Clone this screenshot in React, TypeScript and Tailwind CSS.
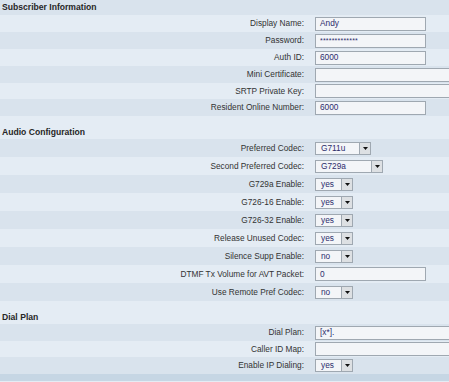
import React from "react";

type Row =
  | { kind: "header"; title: string; bg: string; spacer?: boolean }
  | { kind: "input"; label: string; value?: string; wide?: boolean; bg: string; h: string; secret?: boolean }
  | { kind: "select"; label: string; value: string; w: string; bg: string; h: string };

const LIGHT = "bg-[#e4ecf4]";
const DARK = "bg-[#d9e3ed]";

const rows: Row[] = [
  { kind: "header", title: "Subscriber Information", bg: DARK },
  { kind: "input", label: "Display Name:", value: "Andy", bg: LIGHT, h: "h-[17px]" },
  { kind: "input", label: "Password:", value: "*************", secret: true, bg: DARK, h: "h-[17px]" },
  { kind: "input", label: "Auth ID:", value: "6000", bg: LIGHT, h: "h-[17px]" },
  { kind: "input", label: "Mini Certificate:", wide: true, bg: DARK, h: "h-[17px]" },
  { kind: "input", label: "SRTP Private Key:", wide: true, bg: LIGHT, h: "h-[16px]" },
  { kind: "input", label: "Resident Online Number:", value: "6000", bg: DARK, h: "h-[17px]" },
  { kind: "header", title: "Audio Configuration", bg: LIGHT, spacer: true },
  { kind: "select", label: "Preferred Codec:", value: "G711u", w: "w-[56px]", bg: DARK, h: "h-[18px]" },
  { kind: "select", label: "Second Preferred Codec:", value: "G729a", w: "w-[68px]", bg: LIGHT, h: "h-[18px]" },
  { kind: "select", label: "G729a Enable:", value: "yes", w: "w-[38px]", bg: DARK, h: "h-[18px]" },
  { kind: "select", label: "G726-16 Enable:", value: "yes", w: "w-[38px]", bg: LIGHT, h: "h-[18px]" },
  { kind: "select", label: "G726-32 Enable:", value: "yes", w: "w-[38px]", bg: DARK, h: "h-[18px]" },
  { kind: "select", label: "Release Unused Codec:", value: "yes", w: "w-[38px]", bg: LIGHT, h: "h-[18px]" },
  { kind: "select", label: "Silence Supp Enable:", value: "no", w: "w-[38px]", bg: DARK, h: "h-[18px]" },
  { kind: "input", label: "DTMF Tx Volume for AVT Packet:", value: "0", bg: LIGHT, h: "h-[18px]" },
  { kind: "select", label: "Use Remote Pref Codec:", value: "no", w: "w-[38px]", bg: DARK, h: "h-[18px]" },
  { kind: "header", title: "Dial Plan", bg: LIGHT, spacer: true },
  { kind: "input", label: "Dial Plan:", value: "[x*].", wide: true, bg: DARK, h: "h-[17px]" },
  { kind: "input", label: "Caller ID Map:", wide: true, bg: LIGHT, h: "h-[16px]" },
  { kind: "select", label: "Enable IP Dialing:", value: "yes", w: "w-[38px]", bg: DARK, h: "h-[17px]" },
];

function Label({ text }: { text: string }) {
  return <div className="w-[305px] shrink-0 text-right text-[#333] pr-px">{text}</div>;
}

function TextBox({ value, wide, secret }: { value?: string; wide?: boolean; secret?: boolean }) {
  return (
    <div
      className={`${wide ? "w-[200px]" : "w-[111px]"} h-[14px] shrink-0 border border-[#9fa8b1] bg-[#f3f5f8] flex items-center pl-[4px] text-[#2c2c6c] ${secret ? "text-[7px] tracking-[0.2px]" : ""}`}
    >
      {value}
    </div>
  );
}

function SelectBox({ value, w }: { value: string; w: string }) {
  return (
    <div className={`${w} h-[13px] shrink-0 border border-[#9fa8b1] bg-[#f3f5f8] flex items-stretch`}>
      <div className="flex-1 flex items-center pl-[5px] text-[#2c2c6c]">{value}</div>
      <div className="w-[11px] border-l border-[#9fa8b1] bg-[#dde0e3] flex items-center justify-center">
        <svg width="5" height="3" viewBox="0 0 5 3">
          <path d="M0 0 H5 L2.5 3 Z" fill="#111" />
        </svg>
      </div>
    </div>
  );
}

export default function App() {
  return (
    <div
      className="w-[449px] h-[382px] overflow-hidden bg-[#e4ecf4] text-[8.3px] leading-none"
      style={{ fontFamily: '"Liberation Sans", Arial, sans-serif' }}
    >
      {rows.map((r, i) => {
        if (r.kind === "header") {
          return (
            <div key={i} className={r.bg}>
              {r.spacer && <div className="h-[9px]" />}
              <div className={`${r.spacer ? "h-[14px]" : "h-[15px]"} flex items-center pl-[2px] font-bold text-[8.6px] text-[#262626]`}>
                {r.title}
              </div>
            </div>
          );
        }
        return (
          <div key={i} className={`${r.bg} ${r.h} flex items-center`}>
            <Label text={r.label} />
            <div className="pl-[10px] flex items-center">
              {r.kind === "input" ? (
                <TextBox value={r.value} wide={r.wide} secret={r.secret} />
              ) : (
                <SelectBox value={r.value} w={r.w} />
              )}
            </div>
          </div>
        );
      })}
      <div className="h-[7px] bg-[#c6d6e4]" />
    </div>
  );
}
